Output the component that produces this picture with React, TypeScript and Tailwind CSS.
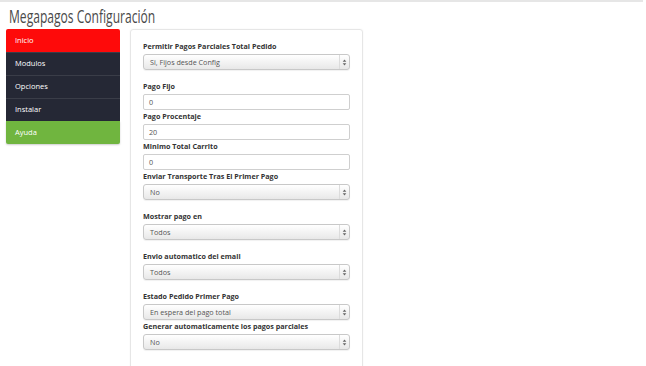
import React from "react";

const labelCls =
  "h-[13px] leading-[13px] text-[7.2px] font-bold text-[#333] whitespace-nowrap";

function SelectBox({ value }: { value: string }) {
  return (
    <div className="mt-[1px] h-[16px] w-full flex items-stretch rounded-[3px] border border-[#c8c8c8] bg-gradient-to-b from-[#ffffff] to-[#e8e8e8] shadow-[0_1px_1px_rgba(0,0,0,0.06)]">
      <div className="flex-1 flex items-center pl-[6px] text-[7.2px] text-[#555]">{value}</div>
      <div className="w-[10px] flex items-center justify-center border-l border-[#dcdcdc]">
        <svg width="5" height="7" viewBox="0 0 5 7">
          <path d="M2.5 0.5 L4.3 2.7 L0.7 2.7 Z" fill="#666" />
          <path d="M2.5 6.5 L4.3 4.3 L0.7 4.3 Z" fill="#666" />
        </svg>
      </div>
    </div>
  );
}

function InputBox({ value }: { value: string }) {
  return (
    <div className="mt-[1px] h-[16px] w-full flex items-center rounded-[2px] border border-[#cfcfcf] bg-white pl-[5px] text-[7.2px] text-[#555]">
      {value}
    </div>
  );
}

type Field = { label: string; kind: "select" | "input"; value: string; loose?: boolean };

const fields: Field[] = [
  { label: "Permitir Pagos Parciales Total Pedido", kind: "select", value: "Si, Fijos desde Config", loose: true },
  { label: "Pago Fijo", kind: "input", value: "0" },
  { label: "Pago Procentaje", kind: "input", value: "20" },
  { label: "Minimo Total Carrito", kind: "input", value: "0" },
  { label: "Enviar Transporte Tras El Primer Pago", kind: "select", value: "No", loose: true },
  { label: "Mostrar pago en", kind: "select", value: "Todos", loose: true },
  { label: "Envio automatico del email", kind: "select", value: "Todos", loose: true },
  { label: "Estado Pedido Primer Pago", kind: "select", value: "En espera del pago total" },
  { label: "Generar automaticamente los pagos parciales", kind: "select", value: "No" },
];

const menu = [
  { name: "Inicio", cls: "bg-[#fe0a0a] rounded-t-[2px]" },
  { name: "Modulos", cls: "bg-[#252835] border-t border-[#3a3d48]" },
  { name: "Opciones", cls: "bg-[#252835] border-t border-[#3a3d48]" },
  { name: "Instalar", cls: "bg-[#252835] border-t border-[#3a3d48]" },
  { name: "Ayuda", cls: "bg-[#70b53f] rounded-b-[2px] shadow-[0_1px_2px_rgba(0,0,0,0.2)]" },
];

export default function App() {
  return (
    <div className="w-[646px] h-[366px] overflow-hidden bg-white" style={{ fontFamily: '"Open Sans", "Noto Sans", sans-serif' }}>
      <div className="h-[2px] w-[643px] bg-[#e6e6e6]" />
      <div className="pl-[9px] h-[27px] pt-[3px]">
        <span
          className="inline-block origin-left scale-x-[0.69] whitespace-nowrap text-[17.5px] leading-[22px] text-[#4a4a4a]"
          style={{ fontFamily: '"Open Sans", sans-serif' }}
        >
          Megapagos Configuración
        </span>
      </div>
      <div className="flex gap-[10px] pl-[6px]">
        <div className="w-[114px] self-start flex flex-col">
          {menu.map((m) => (
            <div key={m.name} className={`h-[23px] flex items-center pl-[9px] text-[7.5px] text-white ${m.cls}`}>
              {m.name}
            </div>
          ))}
        </div>
        <div className="w-[233px] h-[400px] rounded-[3px] border border-[#e6e6e6] shadow-[0_0_2px_rgba(0,0,0,0.05)] px-[12px] pt-[10px]">
          {fields.map((f) => (
            <div key={f.label} className={`flex flex-col ${f.loose ? "mb-[10px]" : ""}`}>
              <div className={labelCls}>{f.label}</div>
              {f.kind === "select" ? <SelectBox value={f.value} /> : <InputBox value={f.value} />}
            </div>
          ))}
        </div>
      </div>
    </div>
  );
}
